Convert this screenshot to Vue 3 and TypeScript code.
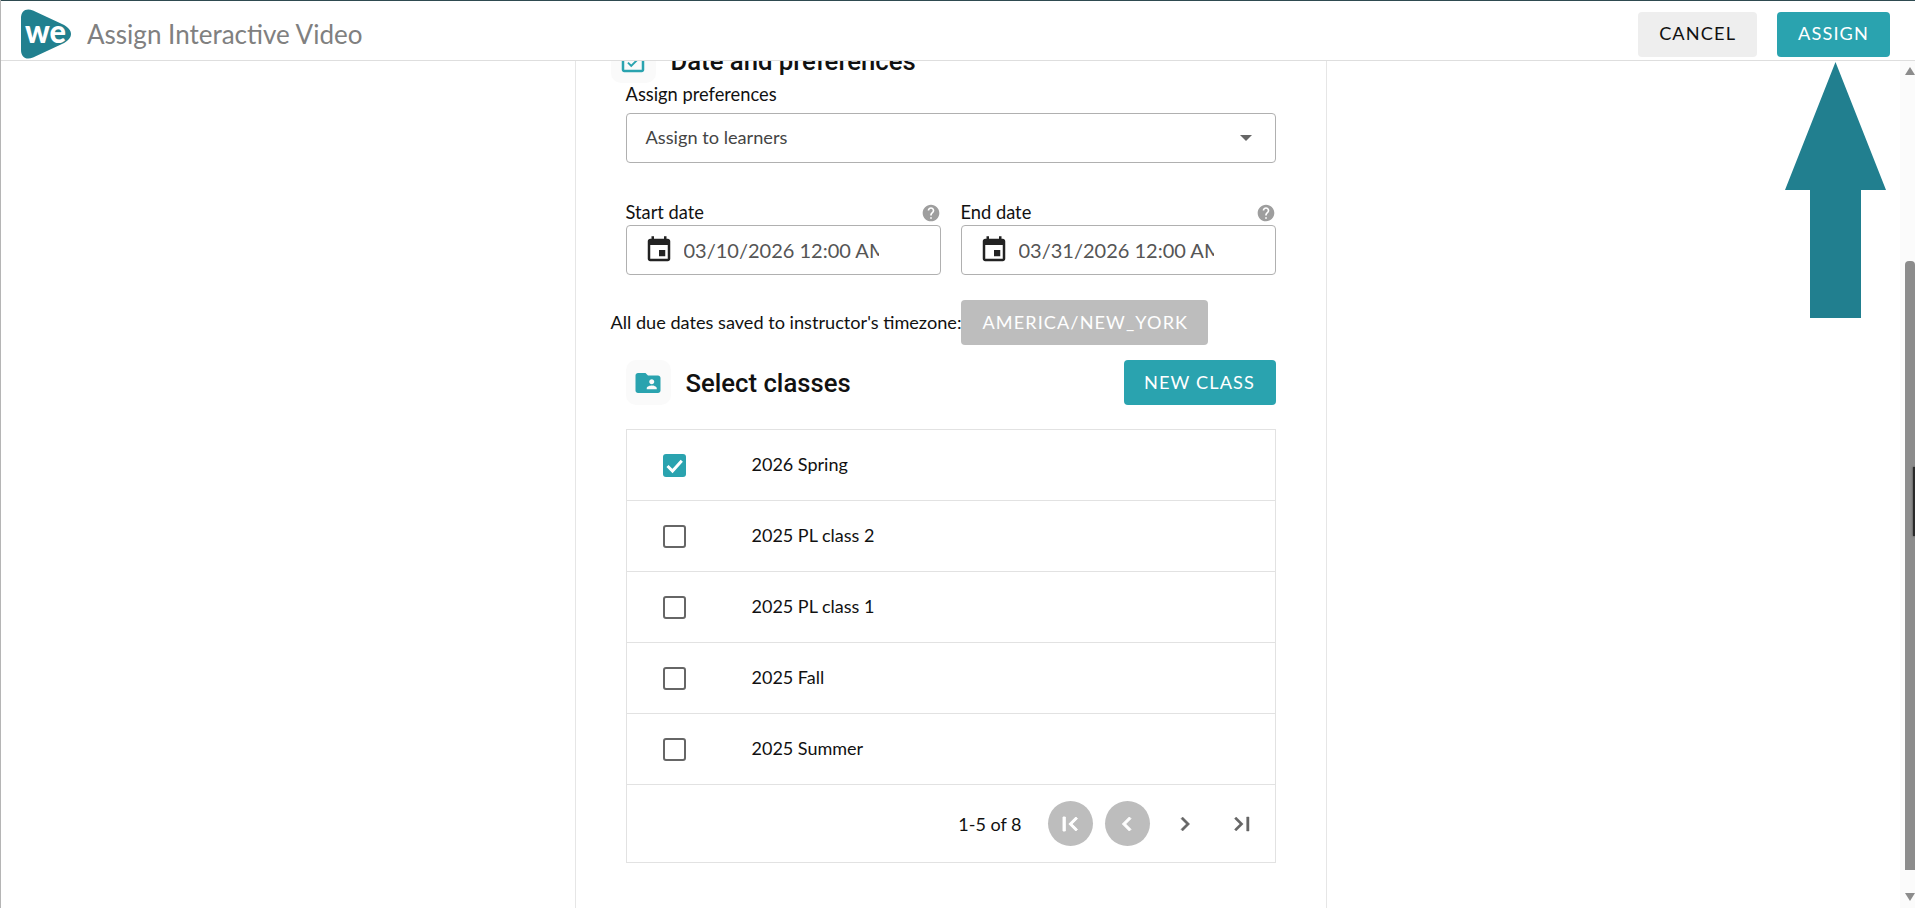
<script setup lang="ts">
const classes = [
  { name: '2026 Spring', checked: true },
  { name: '2025 PL class 2', checked: false },
  { name: '2025 PL class 1', checked: false },
  { name: '2025 Fall', checked: false },
  { name: '2025 Summer', checked: false },
]

const dates = [
  { label: 'Start date', value: '03/10/2026 12:00 AM' },
  { label: 'End date', value: '03/31/2026 12:00 AM' },
]

const calendarIcon = 'M17 12h-5v5h5v-5zM16 1v2H8V1H6v2H5c-1.11 0-1.99.9-1.99 2L3 19c0 1.1.89 2 2 2h14c1.1 0 2-.9 2-2V5c0-1.1-.9-2-2-2h-1V1h-2zm3 18H5V8h14v11z'
const helpIcon = 'M12 2C6.48 2 2 6.48 2 12s4.48 10 10 10 10-4.48 10-10S17.52 2 12 2zm1 17h-2v-2h2v2zm2.07-7.75l-.9.92C13.45 12.9 13 13.5 13 15h-2v-.5c0-1.1.45-2.1 1.17-2.83l1.24-1.26c.37-.36.59-.86.59-1.41 0-1.1-.9-2-2-2s-2 .9-2 2H8c0-2.21 1.79-4 4-4s4 1.79 4 4c0 .88-.36 1.68-.93 2.25z'

const pager = [
  { d: 'M18.41 16.59L13.82 12l4.59-4.59L17 6l-6 6 6 6zM6 6h2v12H6z', disabled: true },
  { d: 'M15.41 7.41L14 6l-6 6 6 6 1.41-1.41L10.83 12z', disabled: true },
  { d: 'M10 6L8.59 7.41 13.17 12l-4.58 4.59L10 18l6-6z', disabled: false },
  { d: 'M5.59 7.41L10.18 12l-4.59 4.59L7 18l6-6-6-6zM16 6h2v12h-2z', disabled: false },
]
</script>

<template>
  <div class="page">
    <header class="topbar">
      <svg class="logo" viewBox="0 0 50 50">
        <path d="M0 9C0 2 5 -1.500 12 1.500L41 15C53 20.500 53 29.500 41 35L12 48.500C5 51.500 0 48 0 41Z" fill="#21808f" />
        <text x="4" y="33.500" textLength="41" lengthAdjust="spacingAndGlyphs" class="logo-text">we</text>
      </svg>
      <span class="title">Assign Interactive Video</span>
      <div class="actions">
        <button class="btn btn-cancel">CANCEL</button>
        <button class="btn btn-primary">ASSIGN</button>
      </div>
    </header>

    <div class="body">
      <main class="main">
        <section class="card">
          <div class="section-head head-first">
            <span class="tile">
              <svg class="tile-icon" viewBox="0 0 24 24"><path d="M16.53 11.06L15.47 10l-4.88 4.88-2.12-2.12-1.06 1.06L10.59 17l5.94-5.94zM19 3h-1V1h-2v2H8V1H6v2H5c-1.11 0-1.99.9-1.99 2L3 19c0 1.1.89 2 2 2h14c1.1 0 2-.9 2-2V5c0-1.1-.9-2-2-2zm0 16H5V8h14v11z" /></svg>
            </span>
            <h2>Date and preferences</h2>
          </div>

          <div class="indent">
            <div class="field-label">Assign preferences</div>
            <div class="box select-box">
              <span class="nudge">Assign to learners</span>
              <span class="caret"></span>
            </div>

            <div class="dates">
              <div v-for="d in dates" :key="d.label" class="date-field">
                <div class="date-label">
                  <span class="nudge">{{ d.label }}</span>
                  <svg class="help" viewBox="0 0 24 24"><path :d="helpIcon" /></svg>
                </div>
                <div class="box date-box">
                  <svg class="cal" viewBox="0 0 24 24"><path :d="calendarIcon" /></svg>
                  <input class="date-input" :value="d.value" readonly />
                </div>
              </div>
            </div>
          </div>

          <div class="timezone">
            <span class="nudge">All due dates saved to instructor's timezone:</span>
            <span class="chip">AMERICA/NEW_YORK</span>
          </div>

          <div class="indent">
            <div class="section-head head-classes">
              <span class="tile">
                <svg class="tile-icon" viewBox="0 0 24 24"><path d="M20 6h-8l-2-2H4c-1.1 0-1.99.9-1.99 2L2 18c0 1.1.9 2 2 2h16c1.1 0 2-.9 2-2V8c0-1.1-.9-2-2-2zm-5 3c1.1 0 2 .9 2 2s-.9 2-2 2-2-.9-2-2 .9-2 2-2zm4 8h-8v-1c0-1.33 2.67-2 4-2s4 .67 4 2v1z" /></svg>
              </span>
              <h2>Select classes</h2>
              <button class="btn btn-primary btn-new">NEW CLASS</button>
            </div>

            <div class="table">
              <div v-for="c in classes" :key="c.name" class="row">
                <span class="check" :class="{ checked: c.checked }">
                  <svg v-if="c.checked" viewBox="0 0 23 23"><path d="M4.500 12L9.500 17L18.800 6.800" /></svg>
                </span>
                <span class="row-name">{{ c.name }}</span>
              </div>
              <div class="pager">
                <span class="range">1-5 of 8</span>
                <span v-for="p in pager" :key="p.d" class="page-btn" :class="{ disabled: p.disabled }">
                  <svg viewBox="0 0 24 24"><path :d="p.d" /></svg>
                </span>
              </div>
            </div>
          </div>
        </section>
      </main>

      <div class="scrollbar">
        <span class="sb-arrow sb-up"></span>
        <div class="sb-track">
          <div class="sb-thumb"><span class="sb-mark"></span></div>
        </div>
        <span class="sb-arrow sb-down"></span>
      </div>
    </div>

    <!-- annotation arrow pointing at the assign button -->
    <svg class="callout" viewBox="0 0 101 256"><path d="M50.500 0L101 128H76V256H25V128H0Z" fill="#217f8f" /></svg>
  </div>
</template>

<style>
html, body {
  margin: 0;
  height: 100%;
  overflow: hidden;
  background: #fff;
}
</style>

<style scoped>
.page {
  position: relative;
  height: 908px;
  display: flex;
  flex-direction: column;
  overflow: hidden;
  font-family: Lato, 'Liberation Sans', sans-serif;
  color: #111;
  background: #fff;
  box-sizing: border-box;
  border-left: 1px solid #b5b5b5;
}

.topbar {
  flex: 0 0 auto;
  height: 52px;
  margin-left: -1px;
  margin-bottom: -1px;
  display: flex;
  align-items: center;
  background: #fff;
  border-top: 1px solid #2e4a50;
  border-left: 1px solid #2e4a50;
  border-bottom: 1px solid #dedede;
  position: relative;
  z-index: 2;
  padding: 7px 25px 0 20px;
}

.logo {
  width: 50px;
  height: 50px;
  flex: none;
}
.logo-text {
  font-family: Lato, sans-serif;
  font-weight: 900;
  font-size: 33px;
  fill: #fff;
}

.title {
  margin-left: 16px;
  font-size: 26px;
  color: #808080;
}

.actions {
  margin-left: auto;
  display: flex;
  gap: 20px;
}

.btn {
  height: 45px;
  border: none;
  border-radius: 4px;
  font-family: inherit;
  font-size: 18.2px;
  letter-spacing: 1.1px;
  padding: 0 21px 2px;
}
.btn-cancel {
  background: #eeeeee;
  color: #111;
}
.btn-primary {
  background: #2aa3af;
  color: #fff;
}

.body {
  flex: 1;
  min-height: 0;
  display: flex;
}

.main {
  flex: 1;
  min-width: 0;
  overflow: hidden;
  display: flex;
  justify-content: center;
}

.card {
  width: 752px;
  box-sizing: border-box;
  flex: none;
  border-left: 1px solid #e6e6e6;
  border-right: 1px solid #e6e6e6;
  padding: 0 50px 40px 35px;
}

.section-head {
  display: flex;
  align-items: center;
  gap: 15px;
}
.section-head h2 {
  margin: 0;
  font-family: Roboto, sans-serif;
  font-weight: 500;
  font-size: 25.7px;
  color: #111;
}
.head-first {
  margin-top: -22px;
}

.tile {
  width: 45px;
  height: 45px;
  flex: none;
  display: flex;
  align-items: center;
  justify-content: center;
  background: #fafafa;
  border-radius: 10px;
}
.tile-icon {
  width: 30px;
  height: 30px;
  fill: #2aa3af;
}

.indent {
  margin-left: 15px;
}

.nudge {
  position: relative;
  top: -1px;
}

.field-label {
  font-size: 18.3px;
  line-height: 22px;
  margin-bottom: 8px;
}

.box {
  box-sizing: border-box;
  height: 50px;
  display: flex;
  align-items: center;
  background: #fff;
  border: 1px solid #b0b0b0;
  border-radius: 4px;
}

.select-box {
  padding: 0 23px 0 19px;
  justify-content: space-between;
  font-size: 18.2px;
  color: #444;
}
.caret {
  width: 0;
  height: 0;
  border-left: 6.5px solid transparent;
  border-right: 6.5px solid transparent;
  border-top: 6.5px solid #666;
}

.dates {
  display: flex;
  gap: 20px;
  margin-top: 38px;
}
.date-field {
  flex: 1;
}
.date-label {
  display: flex;
  align-items: center;
  justify-content: space-between;
  height: 24px;
  font-size: 18.3px;
}
.help {
  width: 20px;
  height: 20px;
  fill: #9e9e9e;
}
.date-box {
  padding-left: 17px;
}
.cal {
  width: 30px;
  height: 30px;
  flex: none;
  fill: #222;
}
.date-input {
  width: 195px;
  margin-left: 10px;
  padding: 0;
  border: none;
  outline: none;
  background: transparent;
  font-family: inherit;
  font-size: 20px;
  color: #555;
}

.timezone {
  display: flex;
  align-items: center;
  margin-top: 25px;
  font-size: 18.15px;
}
.chip {
  height: 45px;
  box-sizing: border-box;
  display: flex;
  align-items: center;
  padding: 0 20px 2px 21px;
  background: #bdbdbd;
  border-radius: 4px;
  color: #fff;
  font-size: 18.1px;
  letter-spacing: 1.1px;
}

.head-classes {
  margin-top: 15px;
}
.btn-new {
  margin-left: auto;
  width: 152px;
  padding: 0 0 2px;
}

.table {
  margin-top: 24px;
  border: 1px solid #e2e2e2;
}
.row {
  height: 71px;
  box-sizing: border-box;
  display: flex;
  align-items: center;
  padding-left: 36px;
  border-bottom: 1px solid #e2e2e2;
  font-size: 18px;
}
.row-name {
  margin-left: 66px;
  position: relative;
  top: -1px;
}
.check {
  width: 23px;
  height: 23px;
  box-sizing: border-box;
  flex: none;
  border: 2px solid #666;
  border-radius: 3px;
}
.check.checked {
  border: none;
  background: #2aa3af;
}
.check svg {
  display: block;
  width: 23px;
  height: 23px;
  fill: none;
  stroke: #fff;
  stroke-width: 3;
}

.pager {
  height: 77px;
  display: flex;
  align-items: center;
  justify-content: flex-end;
  padding-right: 10px;
}
.range {
  font-size: 18px;
  margin-right: 26px;
}
.page-btn {
  width: 45px;
  height: 45px;
  margin-left: 12px;
  display: flex;
  align-items: center;
  justify-content: center;
  border-radius: 50%;
}
.page-btn:nth-of-type(2) {
  margin-left: 0;
}
.page-btn:nth-of-type(4) {
  margin-left: 13px;
}
.page-btn svg {
  width: 28px;
  height: 28px;
  fill: #666;
  stroke: #666;
  stroke-width: 0.4;
}
.page-btn.disabled {
  background: #bdbdbd;
}
.page-btn.disabled svg {
  fill: #fff;
  stroke: #fff;
  stroke-width: 0.8;
}

.scrollbar {
  flex: 0 0 15px;
  display: flex;
  flex-direction: column;
  align-items: flex-end;
  background: #fbfbfb;
  padding: 7px 0;
  box-sizing: border-box;
}
.sb-arrow {
  width: 0;
  height: 0;
  flex: none;
  border-left: 5px solid transparent;
  border-right: 5px solid transparent;
}
.sb-up {
  border-bottom: 8px solid #8c8c8c;
}
.sb-down {
  border-top: 8px solid #8c8c8c;
}
.sb-track {
  flex: 1;
  width: 10px;
  display: flex;
  flex-direction: column;
}
.sb-thumb {
  position: relative;
  margin-top: 186px;
  height: 609px;
  background: #8c8c8c;
  border-radius: 4px 4px 0 0;
}
.sb-mark {
  position: absolute;
  right: 0;
  top: 206px;
  width: 2px;
  height: 69px;
  background: #2a2a2a;
  box-shadow: 0 0 2px #2a2a2a;
}

.callout {
  position: absolute;
  left: 1784px;
  top: 62px;
  width: 101px;
  height: 256px;
}
</style>
